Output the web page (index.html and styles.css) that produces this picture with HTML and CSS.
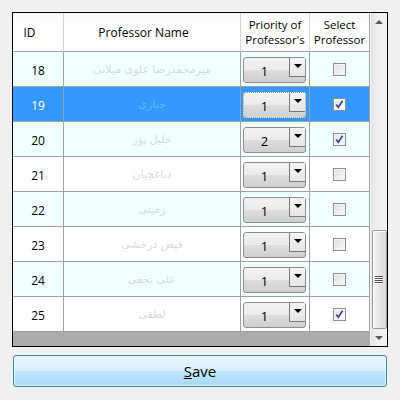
FILE: index.html
```html
<!DOCTYPE html>
<html>
<head>
<meta charset="utf-8">
<link rel="stylesheet" href="styles.css">
</head>
<body>
<div class="window">
  <div class="grid">
    <div class="table">
      <div class="row header">
        <div class="hcell sortable">ID</div>
        <div class="hcell sortable">Professor Name</div>
        <div class="hcell"><span class="hl">Priority of</span><span class="hl">Professor's</span></div>
        <div class="hcell"><span class="hl">Select</span><span class="hl">Professor</span></div>
      </div>

      <div class="row alt">
        <div class="cell id">18</div>
        <div class="cell name"><span dir="rtl">میرمحمدرضا علوی میلانی</span></div>
        <div class="cell prio"><div class="combo"><span class="val">1</span><span class="drop"><i class="tri"></i></span></div></div>
        <div class="cell sel"><span class="chk"></span></div>
      </div>

      <div class="row selected">
        <div class="cell id">19</div>
        <div class="cell name"><span dir="rtl">جباری</span></div>
        <div class="cell prio"><div class="combo focus"><span class="val">1</span><span class="drop"><i class="tri"></i></span></div></div>
        <div class="cell sel"><span class="chk on"><svg width="11" height="11" viewBox="0 0 11 11"><path d="M2.2 5.4 L4.3 8.3 L8.6 1.8" fill="none" stroke="#3a4a8a" stroke-width="1.7"/></svg></span></div>
      </div>

      <div class="row alt">
        <div class="cell id">20</div>
        <div class="cell name"><span dir="rtl">خلیل پور</span></div>
        <div class="cell prio"><div class="combo"><span class="val">2</span><span class="drop"><i class="tri"></i></span></div></div>
        <div class="cell sel"><span class="chk on"><svg width="11" height="11" viewBox="0 0 11 11"><path d="M2.2 5.4 L4.3 8.3 L8.6 1.8" fill="none" stroke="#3a4a8a" stroke-width="1.7"/></svg></span></div>
      </div>

      <div class="row">
        <div class="cell id">21</div>
        <div class="cell name"><span dir="rtl">دباغچیان</span></div>
        <div class="cell prio"><div class="combo"><span class="val">1</span><span class="drop"><i class="tri"></i></span></div></div>
        <div class="cell sel"><span class="chk"></span></div>
      </div>

      <div class="row alt">
        <div class="cell id">22</div>
        <div class="cell name"><span dir="rtl">زمینی</span></div>
        <div class="cell prio"><div class="combo"><span class="val">1</span><span class="drop"><i class="tri"></i></span></div></div>
        <div class="cell sel"><span class="chk"></span></div>
      </div>

      <div class="row">
        <div class="cell id">23</div>
        <div class="cell name"><span dir="rtl">فیض درخشی</span></div>
        <div class="cell prio"><div class="combo"><span class="val">1</span><span class="drop"><i class="tri"></i></span></div></div>
        <div class="cell sel"><span class="chk"></span></div>
      </div>

      <div class="row alt">
        <div class="cell id">24</div>
        <div class="cell name"><span dir="rtl">علی نجفی</span></div>
        <div class="cell prio"><div class="combo"><span class="val">1</span><span class="drop"><i class="tri"></i></span></div></div>
        <div class="cell sel"><span class="chk"></span></div>
      </div>

      <div class="row">
        <div class="cell id">25</div>
        <div class="cell name"><span dir="rtl">لطفی</span></div>
        <div class="cell prio"><div class="combo"><span class="val">1</span><span class="drop"><i class="tri"></i></span></div></div>
        <div class="cell sel"><span class="chk on"><svg width="11" height="11" viewBox="0 0 11 11"><path d="M2.2 5.4 L4.3 8.3 L8.6 1.8" fill="none" stroke="#3a4a8a" stroke-width="1.7"/></svg></span></div>
      </div>
    </div>

    <div class="vscroll">
      <div class="sbtn"><i class="up"></i></div>
      <div class="track">
        <div class="thumb"><span class="grip"></span><span class="grip"></span><span class="grip"></span><span class="grip"></span></div>
      </div>
      <div class="sbtn"><i class="down"></i></div>
    </div>
  </div>

  <button class="save"><u>S</u>ave</button>
</div>
</body>
</html>
```

FILE: styles.css
```css
* { box-sizing: border-box; }

body {
  margin: 0;
  background: #f0f0f0;
  font-family: "Open Sans", "Noto Sans", sans-serif;
  font-size: 12px;
  color: #000;
}

.window {
  padding: 12px;
}

.grid {
  display: flex;
  width: 376px;
  height: 335px;
  border: 1px solid #000;
  background: #ababab;
}

.table {
  width: 357px;
  display: flex;
  flex-direction: column;
}

.row {
  display: grid;
  grid-template-columns: 51px 177px 69px 60px;
  height: 35px;
  background: #fff;
}

.row.alt { background: #f0ffff; }
.row.selected { background: #3399ff; }

.header {
  height: 39px;
  background: linear-gradient(#f6f7f8 0%, #fff 28%, #fff 100%);
}

.hcell {
  border-right: 1px solid #d5d5d5;
  border-bottom: 1px solid #a0a0a0;
  display: flex;
  flex-direction: column;
  align-items: center;
  justify-content: center;
  text-align: center;
}

.hl {
  display: block;
  font-size: 11.5px;
  line-height: 15px;
  height: 15px;
  overflow: visible;
}

.hcell.sortable { padding-right: 17px; }
.hcell:last-child { border-right-color: #a0a0a0; }

.cell {
  border-right: 1px solid #a0a0a0;
  border-bottom: 1px solid #a0a0a0;
  display: flex;
  align-items: center;
  justify-content: center;
}

.id { padding-top: 2px; }
.selected .id { color: #fff; }

.name {
  font-family: "DejaVu Sans", sans-serif;
  font-size: 11px;
  color: #d9d9d9;
}
.selected .name { color: #6cb3ff; }

.prio {
  align-items: flex-start;
  justify-content: flex-start;
  padding: 5px 0 0 2px;
}

.combo {
  display: flex;
  width: 63px;
  height: 26px;
  border: 1px solid #8c8c8c;
  border-radius: 3px;
  background: linear-gradient(#f3f3f3 0%, #ebebeb 48%, #dddddd 52%, #cfcfcf 100%);
}

.combo.focus { outline: 1px dotted #fff; outline-offset: -1px; }

.val {
  flex: 1;
  display: flex;
  align-items: center;
  justify-content: center;
  padding: 1px 4px 0 0;
  font-size: 13px;
}

.drop {
  width: 16px;
  height: 19px;
  border-left: 1px solid #7a7a7a;
  border-bottom: 1px solid #7a7a7a;
  background: linear-gradient(#f4f4f4, #e6e6e6);
  display: flex;
  align-items: center;
  justify-content: center;
}

.tri {
  width: 0;
  height: 0;
  border-left: 4px solid transparent;
  border-right: 4px solid transparent;
  border-top: 4px solid #000;
  margin-top: -2px;
}

.chk {
  width: 13px;
  height: 13px;
  border: 1px solid #8f8f8f;
  background: linear-gradient(135deg, #dcdcdc 0%, #eeeeee 60%, #fbfbfb 100%);
  box-shadow: inset 0 0 0 1px #f4f4f4;
  display: flex;
  align-items: center;
  justify-content: center;
}

.chk.on { background: linear-gradient(135deg, #e4e6ee 0%, #f1f2f6 60%, #fbfbfb 100%); }

.vscroll {
  width: 17px;
  display: flex;
  flex-direction: column;
  background: linear-gradient(to right, #e3e3e3, #eeeeee 30%, #f2f2f2);
  border-left: 1px solid #f7f7f7;
}

.sbtn {
  height: 17px;
  display: flex;
  align-items: center;
  justify-content: center;
}

.up, .down {
  width: 0;
  height: 0;
  border-left: 4px solid transparent;
  border-right: 4px solid transparent;
}
.up { border-bottom: 4px solid #5a5a5a; }
.down { border-top: 4px solid #5a5a5a; }

.track {
  flex: 1;
  display: flex;
  flex-direction: column;
  justify-content: flex-end;
  align-items: center;
}

.thumb {
  width: 15px;
  height: 99px;
  border: 1px solid #999;
  border-radius: 2px;
  background: linear-gradient(to right, #f3f3f3, #e8e8e8 50%, #d8d8d8);
  box-shadow: inset 1px 1px 0 #fff;
  display: flex;
  flex-direction: column;
  align-items: center;
  justify-content: center;
  gap: 1px;
}

.grip {
  width: 8px;
  height: 1px;
  background: #555;
  box-shadow: 0 1px 0 #fff;
}

.save {
  display: block;
  margin: 8px 0 0 1px;
  width: 374px;
  height: 32px;
  border: 1px solid #3c7fb1;
  border-radius: 3px;
  background: linear-gradient(#eaf6fd 0%, #d9f0fc 48%, #bee6fd 52%, #a7d9f5 100%);
  box-shadow: inset 0 0 0 1px rgba(255, 255, 255, 0.6);
  font-family: "Open Sans", "Noto Sans", sans-serif;
  font-size: 15px;
  color: #000;
  padding: 0;
}
```
